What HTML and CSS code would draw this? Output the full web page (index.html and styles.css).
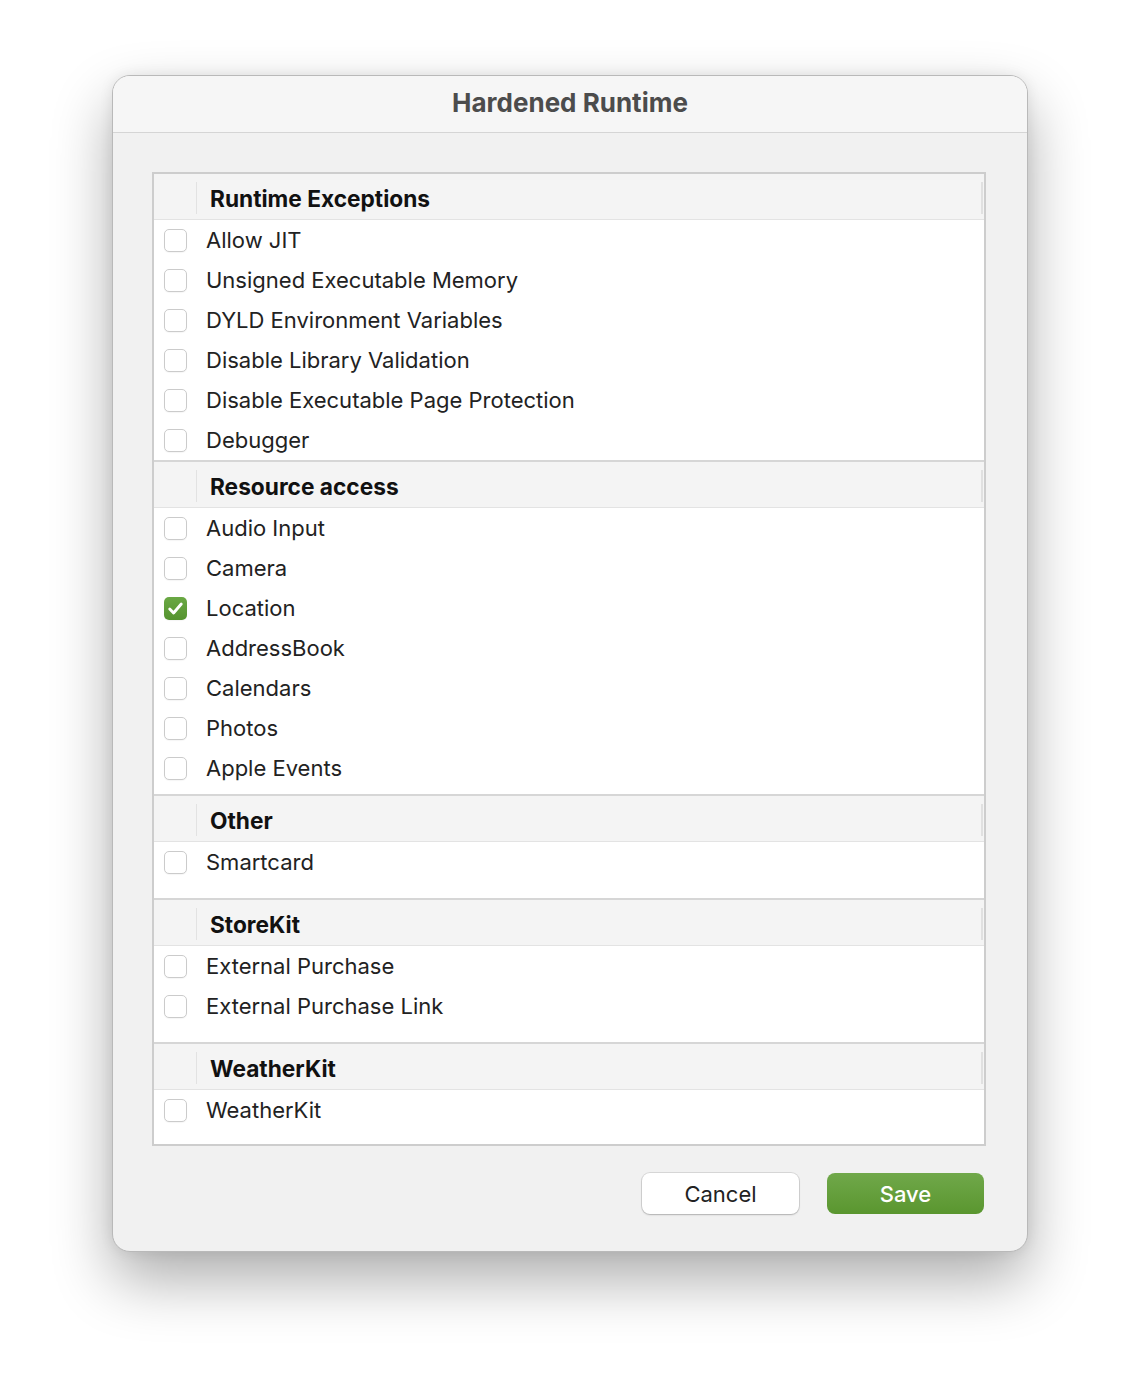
FILE: index.html
```html
<!DOCTYPE html>
<html lang="en">
<head>
  <meta charset="UTF-8" />
  <title>Hardened Runtime</title>
  <link rel="stylesheet" href="styles.css">
</head>
<body>
  <div class="window">
    <div class="titlebar">Hardened Runtime</div>

    <div class="content">
      <div class="table">
        <div class="section">
          <div class="header"><span class="spacer"></span><span class="title">Runtime Exceptions</span><span class="grip"></span></div>
          <div class="row"><span class="check"></span><span class="label">Allow JIT</span></div>
          <div class="row"><span class="check"></span><span class="label">Unsigned Executable Memory</span></div>
          <div class="row"><span class="check"></span><span class="label">DYLD Environment Variables</span></div>
          <div class="row"><span class="check"></span><span class="label">Disable Library Validation</span></div>
          <div class="row"><span class="check"></span><span class="label">Disable Executable Page Protection</span></div>
          <div class="row"><span class="check"></span><span class="label">Debugger</span></div>
        </div>

        <div class="section pad-sm">
          <div class="header"><span class="spacer"></span><span class="title">Resource access</span><span class="grip"></span></div>
          <div class="row"><span class="check"></span><span class="label">Audio Input</span></div>
          <div class="row"><span class="check"></span><span class="label">Camera</span></div>
          <div class="row">
            <span class="check checked">
              <svg viewBox="0 0 24 24" width="23" height="23"><path d="M6 12.5l4 4.2 8-9.4" fill="none" stroke="#fff" stroke-width="3" stroke-linecap="round" stroke-linejoin="round"/></svg>
            </span>
            <span class="label">Location</span>
          </div>
          <div class="row"><span class="check"></span><span class="label">AddressBook</span></div>
          <div class="row"><span class="check"></span><span class="label">Calendars</span></div>
          <div class="row"><span class="check"></span><span class="label">Photos</span></div>
          <div class="row"><span class="check"></span><span class="label">Apple Events</span></div>
        </div>

        <div class="section pad-lg">
          <div class="header"><span class="spacer"></span><span class="title">Other</span><span class="grip"></span></div>
          <div class="row"><span class="check"></span><span class="label">Smartcard</span></div>
        </div>

        <div class="section pad-lg">
          <div class="header"><span class="spacer"></span><span class="title">StoreKit</span><span class="grip"></span></div>
          <div class="row"><span class="check"></span><span class="label">External Purchase</span></div>
          <div class="row"><span class="check"></span><span class="label">External Purchase Link</span></div>
        </div>

        <div class="section pad-md">
          <div class="header"><span class="spacer"></span><span class="title">WeatherKit</span><span class="grip"></span></div>
          <div class="row"><span class="check"></span><span class="label">WeatherKit</span></div>
        </div>
      </div>

      <div class="buttons">
        <button class="btn cancel">Cancel</button>
        <button class="btn save">Save</button>
      </div>
    </div>
  </div>
</body>
</html>
```

FILE: styles.css
```css
body {
  margin: 0;
  padding: 75px 112px 148px;
  background: #ffffff;
  font-family: Inter, 'Noto Sans', sans-serif;
  color: #1f1f1f;
  -webkit-font-smoothing: antialiased;
}
.window {
  width: 916px;
  height: 1177px;
  box-sizing: border-box;
  background: #f1f1f1;
  border: 1px solid #b9b9b9;
  border-radius: 18px;
  box-shadow: 0 28px 60px rgba(0, 0, 0, 0.32), 0 0 14px rgba(0, 0, 0, 0.08);
  overflow: hidden;
}
.titlebar {
  height: 56px;
  line-height: 54px;
  text-align: center;
  font-size: 26px;
  font-weight: 700;
  color: #4c4c4c;
  background: #f6f6f6;
  border-bottom: 1px solid #d5d5d5;
}
.content {
  padding: 39px 41px 0 39px;
}
.table {
  border: 2px solid #cdcdcd;
  background: #ffffff;
}
.section + .section {
  border-top: 2px solid #d6d6d6;
}
.section.pad-sm { padding-bottom: 6px; }
.section.pad-md { padding-bottom: 14px; }
.section.pad-lg { padding-bottom: 16px; }
.header {
  display: flex;
  align-items: center;
  height: 46px;
  padding-top: 3px;
  box-sizing: border-box;
  background: #f4f4f4;
  border-bottom: 1px solid #e3e3e3;
}
.header .spacer {
  width: 42px;
  height: 32px;
  border-right: 1px solid #e2e2e2;
}
.header .title {
  flex: 1;
  padding-left: 13px;
  font-size: 22.7px;
  font-weight: 700;
  color: #111111;
}
.header .grip {
  width: 2px;
  height: 32px;
  margin-right: 1px;
  background: #e0e0e0;
}
.row {
  display: flex;
  align-items: center;
  height: 40px;
  padding-left: 10px;
}
.check {
  display: inline-flex;
  width: 23px;
  height: 23px;
  box-sizing: border-box;
  border: 1px solid #cbcbcb;
  border-radius: 5px;
  background: #ffffff;
  box-shadow: 0 1px 1px rgba(0, 0, 0, 0.04);
}
.check.checked {
  border: none;
  background: linear-gradient(#6aa844, #55932f);
}
.label {
  margin-left: 19px;
  font-size: 22px;
  color: #222222;
}
.buttons {
  display: flex;
  justify-content: flex-end;
  gap: 28px;
  margin-top: 27px;
  padding-right: 2px;
}
.btn {
  width: 157px;
  height: 41px;
  border-radius: 8px;
  font-family: inherit;
  font-size: 22px;
}
.cancel {
  border: none;
  background: #ffffff;
  color: #222222;
  box-shadow: 0 0 0 1px rgba(0, 0, 0, 0.1), 0 1px 2px rgba(0, 0, 0, 0.18);
}
.save {
  border: none;
  background: linear-gradient(#70a84a, #5a962f);
  color: #ffffff;
  font-weight: 500;
}
```
